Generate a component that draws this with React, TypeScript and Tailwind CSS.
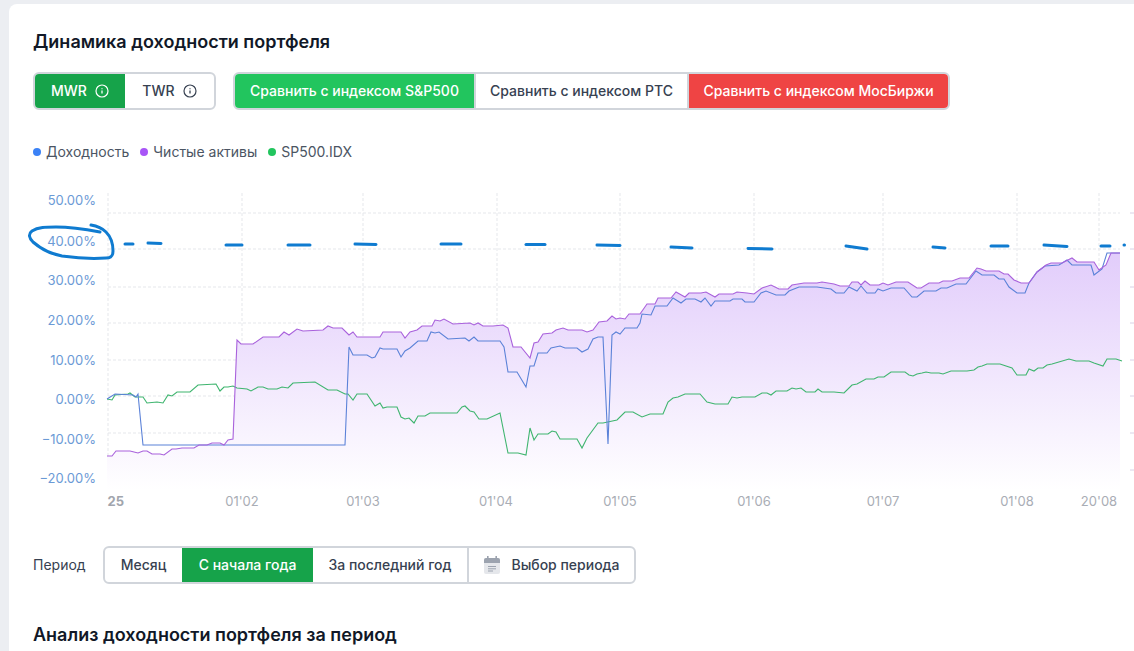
import { ReactNode } from "react";

const green = "107,399 112,400 115,395 128,394 130,393 135,397 143,397 147,403 157,402 163,403 168,395 172,396 177,392 190,392 198,385 216,384 220,391 224,387 228,387 233,386 237,388 247,389 251,391 258,387 263,387 268,389 277,389 282,387 288,388 293,383 315,382 328,390 337,390 345,394 348,394 353,400 357,394 367,394 375,406 380,403 383,408 387,407 397,407 401,417 405,419 409,418 414,423 418,416 425,416 430,413 457,413 462,407 465,406 470,411 474,412 479,419 487,419 500,413 508,453 518,453 526,455 530,428 534,440 538,434 548,434 552,431 556,432 560,439 577,439 582,448 587,438 598,423 603,423 617,420 625,412 633,412 642,417 650,414 663,414 668,402 673,398 678,397 685,394 700,394 707,402 715,404 728,404 732,397 737,398 742,397 755,397 762,393 767,393 771,395 776,391 787,391 792,388 796,389 801,388 806,392 815,392 818,389 822,392 834,392 844,393 852,385 857,384 866,379 874,379 878,377 884,377 891,372 905,372 909,375 913,376 917,374 922,373 926,372 931,373 939,373 943,374 951,371 967,371 974,370 978,367 982,366 987,364 1000,364 1012,368 1017,375 1026,375 1029,369 1034,371 1038,368 1043,368 1047,365 1052,364 1069,359 1076,361 1089,361 1094,363 1103,366 1107,359 1116,359 1122,361";

const purple = "107,456 112,456 116,451 130,451 138,453 143,451 147,451 152,454 160,454 164,455 172,449 176,449 182,448 194,448 199,445 207,445 212,443 220,443 224,445 228,440 233,439 237,340 241,344 253,344 263,337 279,337 284,332 289,335 297,329 303,331 323,330 328,326 333,328 342,328 349,335 353,332 357,337 370,337 380,337 383,332 401,332 405,338 410,332 417,330 422,326 432,326 435,320 440,321 444,319 453,324 470,323 474,325 478,323 483,326 493,326 503,325 508,328 513,347 521,347 530,358 534,343 538,342 543,334 552,333 556,330 563,328 568,330 582,330 587,332 593,330 599,322 607,321 612,316 616,319 620,318 625,319 629,314 640,314 647,304 655,304 658,298 671,298 676,292 685,297 689,293 701,293 706,292 715,297 719,294 733,294 737,292 747,293 754,294 762,288 771,285 779,289 788,289 792,285 804,283 817,283 822,282 834,284 840,286 849,286 852,282 858,282 861,285 865,281 870,285 879,285 883,283 888,285 896,282 908,282 917,288 921,288 929,283 939,283 943,281 952,281 960,278 969,278 977,268 981,269 986,271 999,271 1004,274 1008,274 1014,280 1021,283 1029,283 1037,272 1046,265 1051,263 1062,263 1072,258 1077,262 1094,262 1099,270 1106,265 1111,253 1120,253";

const blue = "107,399 115,394 133,395 136,397 138,394 143,445 345,445 349,347 353,355 367,355 372,358 375,357 380,348 383,349 397,349 401,357 405,351 410,348 418,341 427,341 431,332 435,333 439,332 448,339 465,338 469,341 474,337 478,341 500,341 504,347 508,372 517,372 526,387 530,366 534,366 538,353 547,353 551,348 560,346 565,348 577,348 582,352 588,349 593,339 598,337 603,337 608,444 612,335 616,332 620,334 625,328 637,328 640,323 642,314 651,315 655,306 667,306 673,298 681,303 686,299 695,299 701,302 705,298 711,306 715,301 730,301 733,299 742,299 745,302 754,302 761,293 766,291 776,295 785,295 789,291 799,287 817,287 831,289 836,293 844,293 849,287 857,291 861,286 867,293 875,293 878,289 883,291 891,288 904,288 912,297 917,297 924,291 936,291 941,288 947,288 956,284 966,284 976,271 982,275 994,275 999,279 1004,279 1009,287 1017,293 1025,293 1029,283 1037,272 1045,266 1059,265 1067,260 1072,265 1091,265 1094,275 1102,269 1107,253 1120,253";

const gridY = [213, 249, 287, 323, 360, 396, 433, 470];
const gridX = [108, 242, 363, 497, 620, 754, 883, 1017, 1099];

const yLabels = [
  ["50.00%", 200],
  ["40.00%", 241],
  ["30.00%", 280],
  ["20.00%", 320],
  ["10.00%", 360],
  ["0.00%", 399],
  ["−10.00%", 439],
  ["−20.00%", 478],
] as const;

const xLabels = [
  ["01'02", 242],
  ["01'03", 363],
  ["01'04", 496],
  ["01'05", 620],
  ["01'06", 754],
  ["01'07", 883],
  ["01'08", 1017],
  ["20'08", 1099],
] as const;

const marker = [
  "M125 244h8",
  "M148 243l13 .5",
  "M226 245h16",
  "M288 245h22",
  "M355 244l21 .5",
  "M441 244h20",
  "M526 244.5h19",
  "M597 245l23 .5",
  "M671 247l21 1",
  "M748 248.5l24 .5",
  "M846 246l21 3",
  "M933 247l12 1",
  "M991 246h17",
  "M1044 245l23 1.5",
  "M1101 246h9",
  "M1124 245h.5",
];

function InfoIcon() {
  return (
    <svg width="14" height="14" viewBox="0 0 14 14" fill="none" stroke="currentColor">
      <circle cx="7" cy="7" r="6" strokeWidth="1.2" />
      <path d="M7 6.5v3" strokeWidth="1.3" />
      <path d="M7 4.3v.9" strokeWidth="1.2" />
    </svg>
  );
}

function CalendarIcon() {
  return (
    <svg width="18" height="20" viewBox="0 0 18 20">
      <rect x="1" y="3" width="16" height="16" rx="2" fill="#e5e7eb" />
      <path d="M1 5a2 2 0 0 1 2-2h12a2 2 0 0 1 2 2v3H1z" fill="#9ca3af" />
      <rect x="4" y="1" width="1.6" height="3" fill="#9ca3af" />
      <rect x="12.4" y="1" width="1.6" height="3" fill="#9ca3af" />
      <path d="M5 11.5h8M5 13.8h8M5 16h5" stroke="#9ca3af" strokeWidth="1" />
    </svg>
  );
}

function Segment({
  className,
  children,
}: {
  className: string;
  children: ReactNode;
}) {
  return (
    <div className={`flex h-full items-center justify-center ${className}`}>
      {children}
    </div>
  );
}

function LegendItem({ color, label }: { color: string; label: string }) {
  return (
    <div className="flex items-center gap-[5px]">
      <span className={`h-2 w-2 rounded-full ${color}`} />
      <span>{label}</span>
    </div>
  );
}

function Chart() {
  return (
    <svg
      width="1125"
      height="340"
      viewBox="9 180 1125 340"
      className="mt-[18px] block"
      fontFamily="Inter, sans-serif"
      fontSize="13"
    >
      <defs>
        <linearGradient id="area" gradientUnits="userSpaceOnUse" x1="0" y1="255" x2="0" y2="490">
          <stop offset="0" stopColor="#e2cdfb" />
          <stop offset="1" stopColor="#ffffff" />
        </linearGradient>
        <clipPath id="plot">
          <rect x="107" y="180" width="1030" height="340" />
        </clipPath>
      </defs>

      {gridY.map((y) => (
        <line key={y} x1="108" x2="1120" y1={y} y2={y} stroke="#e5e7eb" strokeDasharray="3 2" />
      ))}
      {gridX.map((x) => (
        <line key={x} x1={x} x2={x} y1="193" y2="487" stroke="#e5e7eb" strokeDasharray="3 2" />
      ))}
      {gridY.map((y) => (
        <line key={y} x1="1130" x2="1134" y1={y} y2={y} stroke="#d9d2e6" />
      ))}

      <polygon points={`${purple} 1120,490 107,490`} fill="url(#area)" />
      <polyline points={green} fill="none" stroke="#3fb56f" strokeWidth="1.1" />
      <polyline points={blue} fill="none" stroke="#5b82d8" strokeWidth="1.1" />
      <polyline points={purple} fill="none" stroke="#a962dc" strokeWidth="1.1" />

      {yLabels.map(([label, y]) => (
        <text key={label} x="96" y={y + 5} textAnchor="end" fill="#6b9ad6">
          {label}
        </text>
      ))}

      <g clipPath="url(#plot)">
        <text x="124" y="506" textAnchor="end" fill="#a1a5ad" fontWeight="700">
          01'25
        </text>
      </g>
      {xLabels.map(([label, x]) => (
        <text key={label} x={x} y="506" textAnchor="middle" fill="#a9adb5">
          {label}
        </text>
      ))}

      {/* hand-drawn annotation on top of the chart */}
      <g fill="none" stroke="#0f7bd0" strokeLinecap="round">
        <path
          d="M91 225c6 1 11 3 15 7 5 5 7 12 7 19 0 5-2 7-7 7-14 1-30 0-44-2-11-2-21-7-29-14-4-4-5-8-1-11 6-4 14-4 24-4 14 0 28 2 44 5"
          strokeWidth="3"
        />
        {marker.map((d) => (
          <path key={d} d={d} strokeWidth="3" />
        ))}
      </g>
    </svg>
  );
}

export default function App() {
  return (
    <div className="h-[651px] overflow-hidden bg-[#eceef2] pl-[9px] pt-1 font-['Inter',sans-serif] text-sm">
      <div className="h-[660px] rounded-tl-lg bg-white pt-6">
        <h2 className="pl-6 text-lg/7 font-semibold text-[#111827]">
          Динамика доходности портфеля
        </h2>

        <div className="mt-4 flex h-[38px] gap-[17px] pl-6 font-medium">
          <div className="flex overflow-hidden rounded-md border-2 border-[#d1d5db]">
            <Segment className="w-[90px] gap-2 bg-[#16a34a] text-white">
              MWR
              <InfoIcon />
            </Segment>
            <Segment className="w-[89px] gap-2 text-[#374151]">
              TWR
              <InfoIcon />
            </Segment>
          </div>
          <div className="flex overflow-hidden rounded-md border-2 border-[#d1d5db]">
            <Segment className="w-[239px] bg-[#22c55e] text-white">
              Сравнить с индексом S&amp;P500
            </Segment>
            <Segment className="w-[215px] border-x-2 border-[#d1d5db] text-[#374151]">
              Сравнить с индексом РТС
            </Segment>
            <Segment className="w-[259px] bg-[#ef4444] text-white">
              Сравнить с индексом МосБиржи
            </Segment>
          </div>
        </div>

        <div className="mt-8 flex h-5 gap-[11px] pl-6 text-[#4b5563]">
          <LegendItem color="bg-[#3b82f6]" label="Доходность" />
          <LegendItem color="bg-[#a855f7]" label="Чистые активы" />
          <LegendItem color="bg-[#22c55e]" label="SP500.IDX" />
        </div>

        <Chart />

        <div className="mt-[26px] flex h-[38px] items-center pl-6 text-[#374151]">
          <span className="w-[70px]">Период</span>
          <div className="flex h-full overflow-hidden rounded-md border-2 border-[#d1d5db] font-medium">
            <Segment className="w-[77px]">Месяц</Segment>
            <Segment className="w-[131px] bg-[#16a34a] text-white">С начала года</Segment>
            <Segment className="w-[156px] border-r-2 border-[#d1d5db]">За последний год</Segment>
            <Segment className="w-[165px] gap-[10px]">
              <CalendarIcon />
              Выбор периода
            </Segment>
          </div>
        </div>

        <h2 className="mt-[37px] pl-6 text-lg/7 font-semibold text-[#111827]">
          Анализ доходности портфеля за период
        </h2>
      </div>
    </div>
  );
}
